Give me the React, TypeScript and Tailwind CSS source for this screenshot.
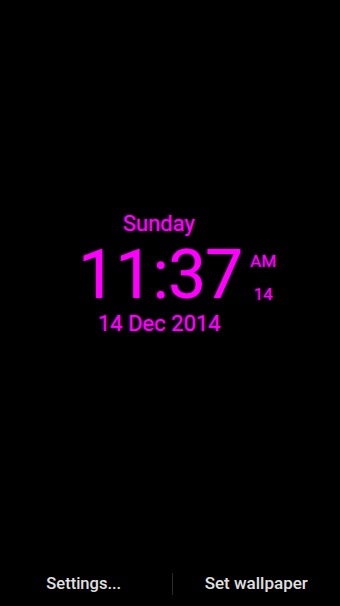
export default function App() {
  const glow = "[text-shadow:0_0_2px_rgba(255,0,255,0.7)]";
  return (
    <div className="h-[606px] w-[340px] bg-black flex flex-col font-['Roboto',sans-serif] overflow-hidden">
      {/* Часы */}
      <div className="flex-grow flex flex-col items-start pt-[210px]">
        <div className={`text-[22px] leading-[28px] text-[#f0f] ${glow} ml-[123px]`}>Sunday</div>
        <div className="flex items-start mt-[3px] ml-[78px]">
          <div className={`text-[68px] leading-[68px] text-[#f0f] ${glow} tracking-[-1px]`}>11:37</div>
          <div className="flex flex-col items-center ml-[8px] pt-[10px]">
            <span className={`text-[17px] leading-[20px] text-[#f0f] ${glow}`}>AM</span>
            <span className={`text-[17px] leading-[20px] text-[#f0f] ${glow} mt-[13px]`}>14</span>
          </div>
        </div>
        <div className={`text-[22px] leading-[28px] text-[#f0f] ${glow} ml-[98px] mt-[1px]`}>14 Dec 2014</div>
      </div>

      {/* Нижняя панель */}
      <div className="h-[44px] flex items-center">
        <div className="flex-1 flex justify-center pr-[4px]">
          <span className="text-[16.5px] font-medium text-[#e0e0e0]">Settings...</span>
        </div>
        <div className="w-px h-[22px] bg-[#2a2a2a]" />
        <div className="flex-1 flex justify-center">
          <span className="text-[17px] font-medium text-[#e0e0e0]">Set wallpaper</span>
        </div>
      </div>
    </div>
  );
}
